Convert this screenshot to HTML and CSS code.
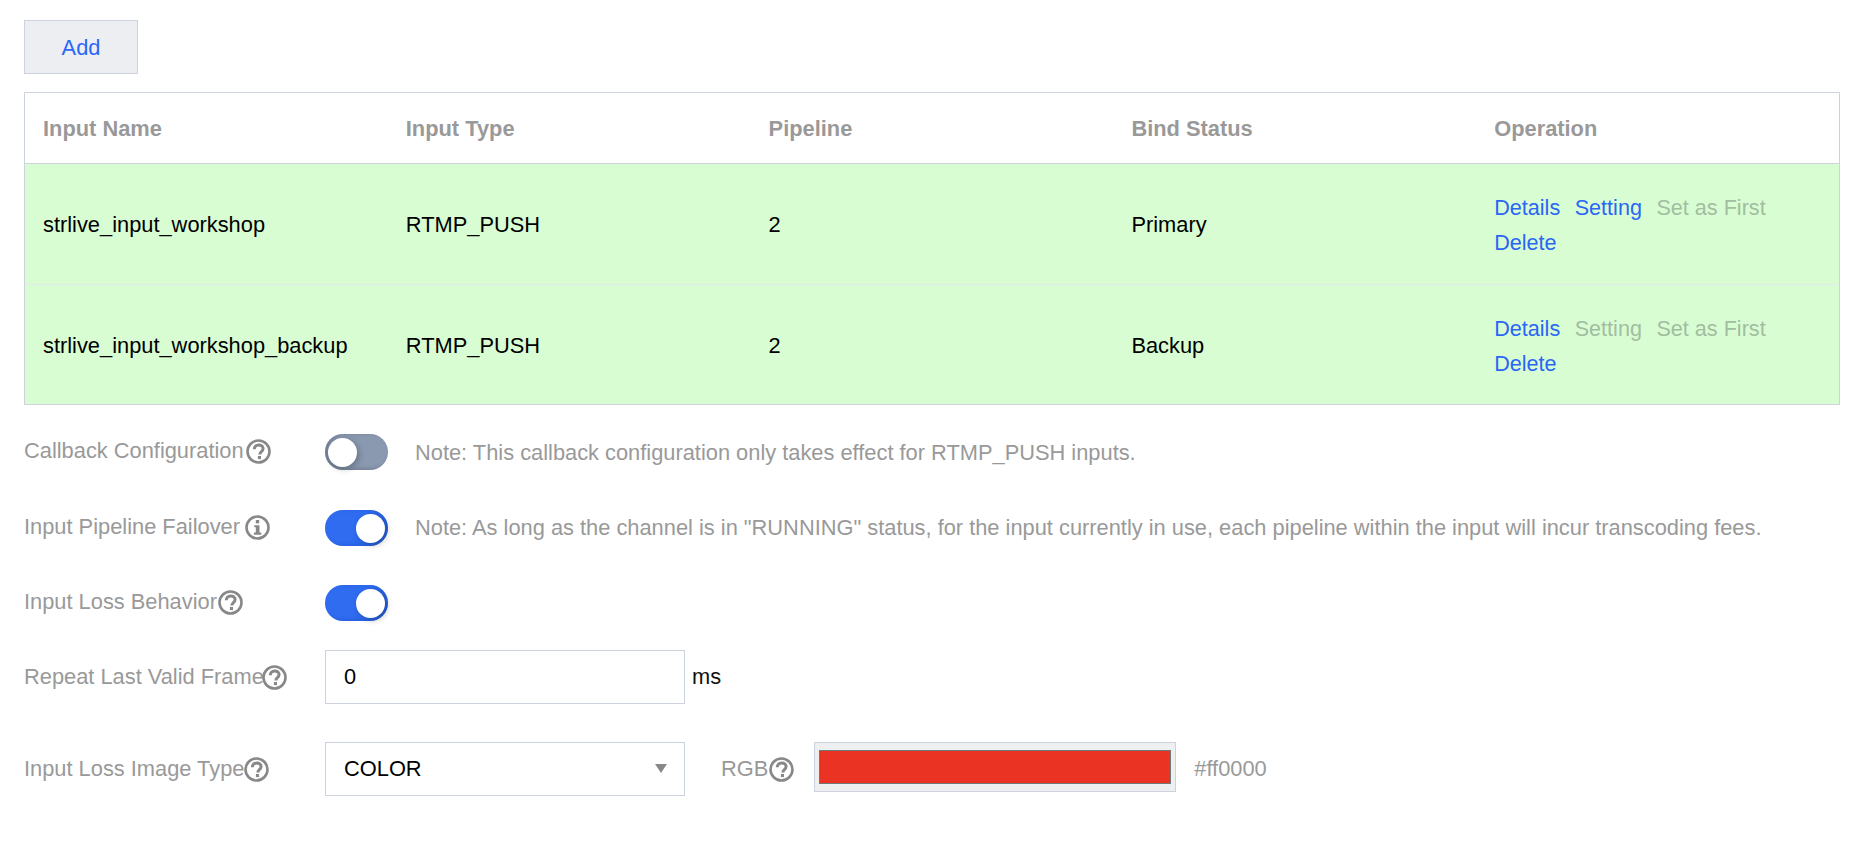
FILE: index.html
```html
<!DOCTYPE html>
<html lang="en">
<head>
<meta charset="utf-8">
<title>Inputs</title>
<link rel="stylesheet" href="styles.css">
</head>
<body>
<svg class="defs" width="0" height="0" aria-hidden="true">
  <symbol id="help" viewBox="0 0 25 25">
    <circle cx="12.5" cy="12.5" r="11" fill="none" stroke="currentColor" stroke-width="2.6"/>
    <path d="M8.3 10.2c0-2.7 1.9-4.3 4.4-4.3s4.4 1.5 4.4 3.7c0 3.1-3.3 3-3.3 5.9" fill="none" stroke="currentColor" stroke-width="3"/>
    <rect x="11.9" y="17" width="3.1" height="3.1" fill="currentColor"/>
  </symbol>
  <symbol id="info" viewBox="0 0 25 25">
    <circle cx="12.5" cy="12.5" r="11" fill="none" stroke="currentColor" stroke-width="2.6"/>
    <rect x="10.8" y="5" width="3.4" height="3.4" fill="currentColor"/>
    <path d="M9.3 10.2h5.2v7.4h1.8v2.1H8.9v-2.1h1.9v-5.3H9.3z" fill="currentColor"/>
  </symbol>
</svg>
<main class="page">
  <button class="add-btn" type="button">Add</button>

  <div class="table">
    <div class="row head">
      <div class="cell">Input Name</div>
      <div class="cell">Input Type</div>
      <div class="cell">Pipeline</div>
      <div class="cell">Bind Status</div>
      <div class="cell">Operation</div>
    </div>
    <div class="row body">
      <div class="cell">strlive_input_workshop</div>
      <div class="cell">RTMP_PUSH</div>
      <div class="cell">2</div>
      <div class="cell">Primary</div>
      <div class="cell ops">
        <a class="op">Details</a><a class="op">Setting</a><a class="op off">Set as First</a><a class="op">Delete</a>
      </div>
    </div>
    <div class="row body">
      <div class="cell">strlive_input_workshop_backup</div>
      <div class="cell">RTMP_PUSH</div>
      <div class="cell">2</div>
      <div class="cell">Backup</div>
      <div class="cell ops">
        <a class="op">Details</a><a class="op off">Setting</a><a class="op off">Set as First</a><a class="op">Delete</a>
      </div>
    </div>
  </div>

  <div class="form">
    <div class="field f-callback">
      <div class="label">Callback Configuration<svg class="ico"><use href="#help"/></svg></div>
      <span class="switch"><span class="knob"></span></span>
      <span class="note">Note: This callback configuration only takes effect for RTMP_PUSH inputs.</span>
    </div>
    <div class="field f-failover">
      <div class="label">Input Pipeline Failover <svg class="ico ico-info"><use href="#info"/></svg></div>
      <span class="switch on"><span class="knob"></span></span>
      <span class="note">Note: As long as the channel is in "RUNNING" status, for the input currently in use, each pipeline within the input will incur transcoding fees.</span>
    </div>
    <div class="field f-loss">
      <div class="label">Input Loss Behavior<svg class="ico"><use href="#help"/></svg></div>
      <span class="switch on"><span class="knob"></span></span>
    </div>
    <div class="field f-repeat">
      <div class="label">Repeat Last Valid Frame<svg class="ico"><use href="#help"/></svg></div>
      <input class="control" type="text" value="0">
      <span class="unit">ms</span>
    </div>
    <div class="field f-image">
      <div class="label">Input Loss Image Type<svg class="ico"><use href="#help"/></svg></div>
      <div class="select-wrap"><select class="control select"><option>COLOR</option></select></div>
      <div class="label rgb">RGB<svg class="ico"><use href="#help"/></svg></div>
      <div class="swatch"><div class="swatch-fill"></div></div>
      <span class="hex">#ff0000</span>
    </div>
  </div>
</main>
</body>
</html>
```

FILE: styles.css
```css
* { box-sizing: border-box; }
html, body { margin: 0; background: #fff; }
body {
  font-family: "Liberation Sans", Arial, sans-serif;
  font-size: 21.84px;
  color: #000;
  width: 1868px;
  height: 852px;
  overflow: hidden;
}
.defs { position: absolute; }
.page { padding: 20px 28px 0 24px; }

.add-btn {
  display: block;
  width: 114px;
  height: 54px;
  background: #edeef2;
  border: 1px solid #ccd2de;
  color: #2a66f6;
  font: inherit;
  padding: 1px 0 0;
}

.table {
  margin-top: 18px;
  border: 1px solid #ccd2de;
}
.row { display: grid; grid-template-columns: repeat(5, 1fr); }
.cell { padding: 2px 18px 0; align-self: center; white-space: nowrap; }
.head { height: 71px; border-bottom: 1px solid #ccd2de; font-weight: 700; color: #999; }
.body { height: 120px; background: #d9fdd2; }
.body + .body { border-top: 1px solid #e6e9ec; }

.ops { display: flex; flex-wrap: wrap; column-gap: 14.5px; line-height: 35px; font-size: 21.6px; }
.op { color: #2a66f6; }
.op.off { color: #a1bea1; }

.form { color: #999; }
.field { display: flex; align-items: center; }
.label { width: 301px; flex: none; display: flex; align-items: center; white-space: pre; color: #999; }
.ico { width: 25px; height: 25px; flex: none; color: #888; }

.f-callback { margin-top: 29px; height: 36px; }
.f-failover { margin-top: 40px; height: 36px; }
.f-loss { margin-top: 39px; height: 36px; }
.f-repeat { margin-top: 29px; height: 54px; }
.f-image { margin-top: 38px; height: 54px; }
.f-callback .label, .f-failover .label, .f-loss .label { margin-bottom: 2px; }
.f-callback .note { margin-top: 2px; }
.f-callback .ico { margin-left: 2px; }
.f-loss .ico { margin-left: 1px; }
.f-repeat .ico { margin-left: -2px; }
.f-repeat .label { width: 301px; }
.ico-info { margin-left: -1px; }

.switch {
  position: relative;
  width: 63px;
  height: 36px;
  flex: none;
  border-radius: 18px;
  background: #8a99b0;
  box-shadow: inset 3px -1px 4px rgba(60, 70, 90, .35);
}
.switch.on { background: #2f6cf0; box-shadow: inset -3px -1px 4px rgba(20, 60, 170, .3); }
.knob {
  position: absolute;
  left: 3px;
  top: 3.5px;
  width: 29px;
  height: 29px;
  border-radius: 50%;
  background: #fff;
  box-shadow: 2px 2px 6px rgba(0, 0, 0, .25);
}
.switch.on .knob { left: 31px; }

.note { margin-left: 27px; white-space: nowrap; }

.control {
  width: 360px;
  height: 54px;
  flex: none;
  border: 1px solid #ccd2de;
  background: #fff;
  color: #000;
  font: inherit;
  padding: 0 18px;
  border-radius: 0;
  outline: none;
}
.select-wrap { position: relative; flex: none; height: 54px; }
.select { appearance: none; display: block; padding-bottom: 2px; }
.select-wrap::after {
  content: "";
  position: absolute;
  left: 330px;
  top: 22px;
  border-top: 9px solid #888;
  border-left: 6.5px solid transparent;
  border-right: 6.5px solid transparent;
}
.unit { margin-left: 7px; color: #111; }
.rgb { width: auto; margin-left: 36px; }
.rgb .ico { margin-left: 1px; }
.swatch {
  width: 362px;
  height: 50px;
  flex: none;
  margin-left: 20px;
  margin-bottom: 4px;
  padding: 7px 4px;
  background: #eeeff0;
  border: 1px solid #ccd2de;
}
.swatch-fill { height: 100%; background: #eb3323; border: 1px solid #6f7a78; }
.hex { margin-left: 18px; color: #999; }
```
